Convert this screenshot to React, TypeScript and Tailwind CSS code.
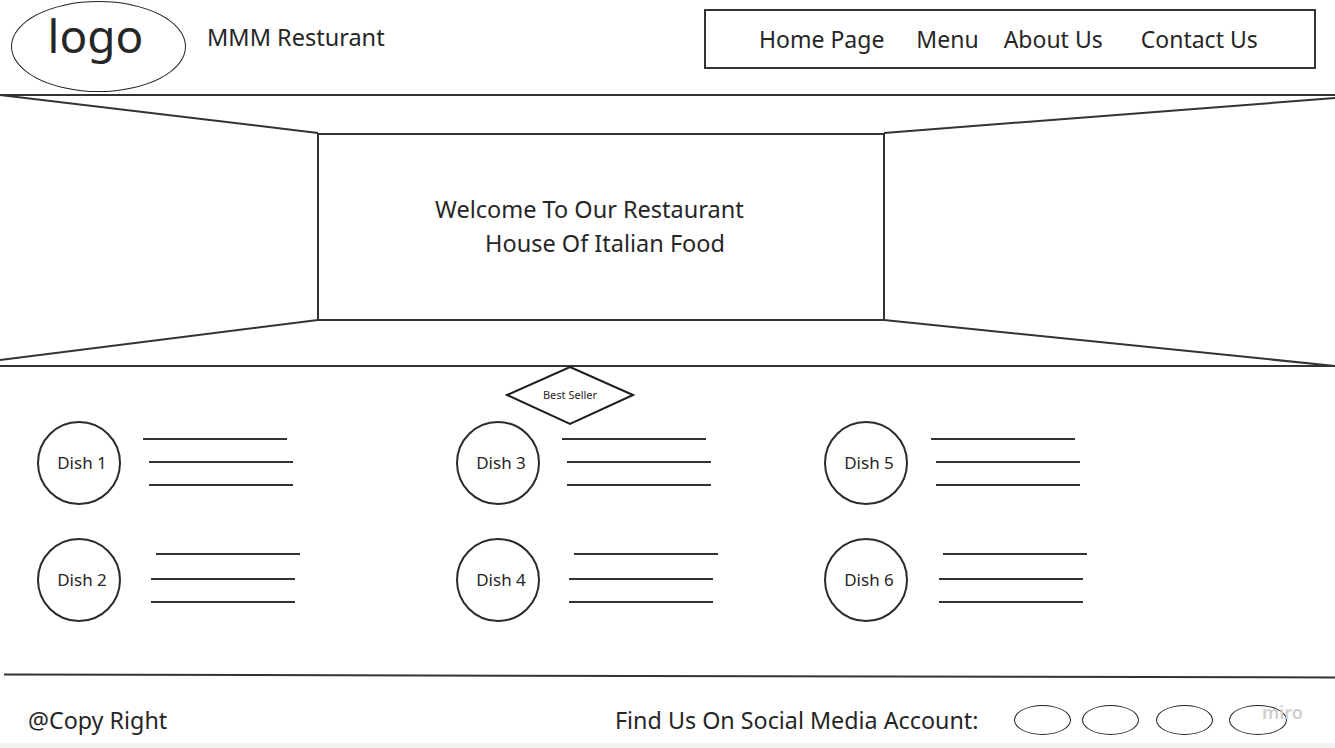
import React from "react";

type Dish = {
  name: string;
  lines: { x: number; y: number }[];
};

const columns: { width: string; dishes: Dish[] }[] = [
  {
    width: "w-[419px]",
    dishes: [
      { name: "Dish 1", lines: [{ x: 22, y: 17 }, { x: 28, y: 40 }, { x: 28, y: 63 }] },
      { name: "Dish 2", lines: [{ x: 35, y: 15 }, { x: 30, y: 40 }, { x: 30, y: 63 }] },
    ],
  },
  {
    width: "w-[368px]",
    dishes: [
      { name: "Dish 3", lines: [{ x: 22, y: 17 }, { x: 27, y: 40 }, { x: 27, y: 63 }] },
      { name: "Dish 4", lines: [{ x: 34, y: 15 }, { x: 29, y: 40 }, { x: 29, y: 63 }] },
    ],
  },
  {
    width: "flex-1",
    dishes: [
      { name: "Dish 5", lines: [{ x: 23, y: 17 }, { x: 28, y: 40 }, { x: 28, y: 63 }] },
      { name: "Dish 6", lines: [{ x: 35, y: 15 }, { x: 31, y: 40 }, { x: 31, y: 63 }] },
    ],
  },
];

function DishItem({ dish }: { dish: Dish }) {
  return (
    <div className="flex items-start h-[84px]">
      <div className="w-[84px] h-[84px] shrink-0 rounded-full border-2 border-[#2b2b2b] flex items-center justify-center pl-[6px] text-[17px]">
        {dish.name}
      </div>
      {/* placeholder text lines */}
      <div className="relative h-full w-[170px]">
        {dish.lines.map((l, i) => (
          <div
            key={i}
            className="absolute h-[2px] w-[144px] bg-[#333]"
            style={{ left: l.x, top: l.y }}
          />
        ))}
      </div>
    </div>
  );
}

export default function App() {
  return (
    <div className="w-[1335px] h-[748px] relative overflow-hidden bg-white text-[#262626] font-['Noto_Sans','Open_Sans',sans-serif] flex flex-col">
      {/* Header */}
      <header className="h-[94px] flex items-start shrink-0">
        <div className="ml-[11px] mt-[1px] w-[175px] h-[91px] shrink-0 rounded-[50%] border-[1.5px] border-[#222] flex justify-center">
          <span className="text-[46px] leading-none mt-[10px] -ml-[6px]">logo</span>
        </div>
        <span className="ml-[21px] mt-[23px] text-[23.5px] leading-[28px]">MMM Resturant</span>
        <nav className="ml-auto mr-[19px] mt-[9px] w-[612px] h-[60px] border-2 border-[#333] flex items-center pl-[53px] text-[23px]">
          <a>Home Page</a>
          <a className="ml-[32px]">Menu</a>
          <a className="ml-[25px]">About Us</a>
          <a className="ml-[38px]">Contact Us</a>
        </nav>
      </header>

      {/* Hero */}
      <section className="relative h-[273px] shrink-0 border-y-2 border-[#333]">
        <svg
          className="absolute left-0 top-0 overflow-visible"
          width="1335"
          height="269"
          viewBox="0 0 1335 269"
          fill="none"
        >
          <g stroke="#333" strokeWidth="2">
            <line x1="0" y1="-1" x2="318" y2="37" />
            <line x1="1335" y1="2" x2="884" y2="37" />
            <line x1="0" y1="264" x2="318" y2="224" />
            <line x1="1335" y1="270" x2="884" y2="224" />
          </g>
        </svg>
        <div className="relative ml-[317px] mt-[37px] w-[568px] h-[188px] border-2 border-[#333] bg-white flex flex-col text-[23.5px] leading-[34px] pt-[57px]">
          <span className="ml-[116px]">Welcome To Our Restaurant</span>
          <span className="ml-[166px]">House Of Italian Food</span>
        </div>
      </section>

      {/* Dishes */}
      <section className="relative flex-1 pt-[54px]">
        <svg className="absolute left-[505px] -top-[1px]" width="130" height="60" viewBox="0 0 130 60" fill="none">
          <polygon points="65,1 128,29 65,58 2,29" stroke="#1f1f1f" strokeWidth="2" fill="white" />
        </svg>
        <span className="absolute left-[505px] top-[21px] w-[130px] text-center text-[11px] leading-[14px]">Best Seller</span>
        <div className="flex pl-[37px]">
          {columns.map((col, i) => (
            <div key={i} className={`${col.width} flex flex-col gap-[33px]`}>
              {col.dishes.map((d) => (
                <DishItem key={d.name} dish={d} />
              ))}
            </div>
          ))}
        </div>
      </section>

      {/* Footer */}
      <div className="ml-[4px] h-[2px] bg-[#333] shrink-0 rotate-[0.13deg]" />
      <footer className="relative h-[66px] shrink-0 flex items-center pt-[20px] text-[23.3px]">
        <span className="ml-[28px] w-[587px] shrink-0">@Copy Right</span>
        <span>Find Us On Social Media Account:</span>
        <div className="ml-auto mr-[48px] flex items-center">
          <div className="w-[57px] h-[30px] rounded-[50%] border-[1.5px] border-[#1f1f1f]" />
          <div className="ml-[11px] w-[57px] h-[30px] rounded-[50%] border-[1.5px] border-[#1f1f1f]" />
          <div className="ml-[17px] w-[57px] h-[30px] rounded-[50%] border-[1.5px] border-[#1f1f1f]" />
          <div className="ml-[16px] w-[58px] h-[30px] rounded-[50%] border-[1.5px] border-[#1f1f1f]" />
        </div>
        <span className="absolute left-[1262px] top-[26px] text-[18px] font-semibold text-[#cfcfcf] leading-none">miro</span>
      </footer>
      <div className="h-[5px] bg-[#f1f1f1] shrink-0" />
    </div>
  );
}
